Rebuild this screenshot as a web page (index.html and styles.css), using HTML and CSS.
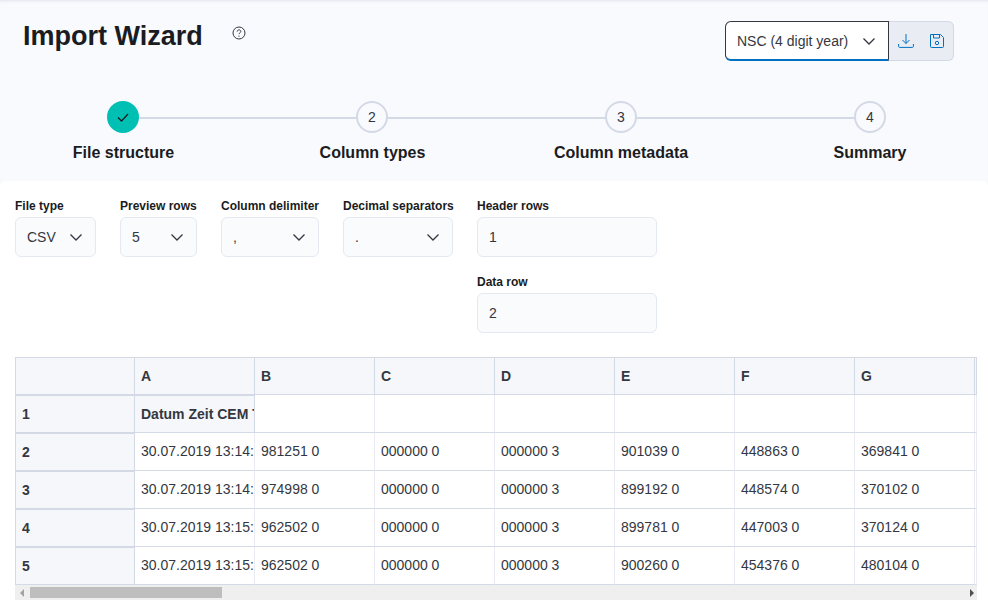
FILE: index.html
```html
<!DOCTYPE html>
<html lang="en">
<head>
<meta charset="utf-8">
<title>Import Wizard</title>
<link rel="stylesheet" href="styles.css">
</head>
<body>
<header class="top">
  <div class="title-row">
    <h1 class="title">Import Wizard</h1>
    <svg class="help" width="14" height="14" viewBox="0 0 14 14" fill="none" stroke="#343741"><circle cx="7" cy="7" r="6"/><path d="M5.2 5.600c0-1.100.8-1.700 1.800-1.700s1.800.6 1.800 1.600c0 1.300-1.800 1.300-1.800 2.600" stroke-width="1"/><circle cx="7" cy="10.100" r=".7" fill="#343741" stroke="none"/></svg>
    <div class="format-group">
      <div class="format-select"><span>NSC (4 digit year)</span>
        <svg class="chev" width="16" height="16" viewBox="0 0 16 16" fill="none" stroke="#343741" stroke-width="1.300"><path d="M2.500 5.500 8 11l5.500-5.500"/></svg>
      </div>
      <div class="format-actions">
        <svg width="16" height="16" viewBox="0 0 16 16" fill="none" stroke="#0071c2" stroke-width="1"><path d="M8 1v9.500M4.500 7 8 10.500 11.500 7M.6 11v2.400c0 .6.400 1 1 1h12.800c.6 0 1-.4 1-1V11"/></svg>
        <svg width="16" height="16" viewBox="0 0 16 16" fill="none" stroke="#0071c2" stroke-width="1"><path d="M1.500 1.500h10l3 3v9a1 1 0 0 1-1 1h-11a1 1 0 0 1-1-1zM4.500 1.500v3.500h6V1.500"/><circle cx="8" cy="10" r="1.700"/></svg>
      </div>
    </div>
  </div>
  <ol class="steps">
    <li class="step step-done"><span class="dot"><svg width="14" height="14" viewBox="0 0 14 14" fill="none" stroke="#1a1c21" stroke-width="1.300"><path d="M2 7.500 5.500 11 12 4"/></svg></span><span class="step-label">File structure</span></li>
    <li class="step"><span class="dot">2</span><span class="step-label">Column types</span></li>
    <li class="step"><span class="dot">3</span><span class="step-label">Column metadata</span></li>
    <li class="step"><span class="dot">4</span><span class="step-label">Summary</span></li>
  </ol>
</header>
<main class="panel">
  <form class="form">
    <div class="field w-file"><label class="label">File type</label><div class="control"><span>CSV</span><svg class="chev" width="16" height="16" viewBox="0 0 16 16" fill="none" stroke="#343741" stroke-width="1.300"><path d="M2.500 5.500 8 11l5.500-5.500"/></svg></div></div>
    <div class="field w-rows"><label class="label">Preview rows</label><div class="control"><span>5</span><svg class="chev" width="16" height="16" viewBox="0 0 16 16" fill="none" stroke="#343741" stroke-width="1.300"><path d="M2.500 5.500 8 11l5.500-5.500"/></svg></div></div>
    <div class="field w-delim"><label class="label">Column delimiter</label><div class="control"><span>,</span><svg class="chev" width="16" height="16" viewBox="0 0 16 16" fill="none" stroke="#343741" stroke-width="1.300"><path d="M2.500 5.500 8 11l5.500-5.500"/></svg></div></div>
    <div class="field w-dec"><label class="label">Decimal separators</label><div class="control"><span>.</span><svg class="chev" width="16" height="16" viewBox="0 0 16 16" fill="none" stroke="#343741" stroke-width="1.300"><path d="M2.500 5.500 8 11l5.500-5.500"/></svg></div></div>
    <div class="stack">
      <div class="field w-num"><label class="label">Header rows</label><div class="control"><span>1</span></div></div>
      <div class="field w-num"><label class="label">Data row</label><div class="control"><span>2</span></div></div>
    </div>
  </form>
  <div class="grid-wrap">
    <table class="sheet">
      <thead>
        <tr><th class="hd corner"></th><th class="hd">A</th><th class="hd">B</th><th class="hd">C</th><th class="hd">D</th><th class="hd">E</th><th class="hd">F</th><th class="hd">G</th><th class="hd"></th></tr>
      </thead>
      <tbody>
        <tr><th class="rh">1</th><td class="frozen"><div class="clip">Datum Zeit CEM Temperatur</div></td><td></td><td></td><td></td><td></td><td></td><td></td><td></td></tr>
        <tr><th class="rh">2</th><td><div class="clip">30.07.2019 13:14:00</div></td><td>981251 0</td><td>000000 0</td><td>000000 3</td><td>901039 0</td><td>448863 0</td><td>369841 0</td><td></td></tr>
        <tr><th class="rh">3</th><td><div class="clip">30.07.2019 13:14:30</div></td><td>974998 0</td><td>000000 0</td><td>000000 3</td><td>899192 0</td><td>448574 0</td><td>370102 0</td><td></td></tr>
        <tr><th class="rh">4</th><td><div class="clip">30.07.2019 13:15:00</div></td><td>962502 0</td><td>000000 0</td><td>000000 3</td><td>899781 0</td><td>447003 0</td><td>370124 0</td><td></td></tr>
        <tr><th class="rh">5</th><td><div class="clip">30.07.2019 13:15:30</div></td><td>962502 0</td><td>000000 0</td><td>000000 3</td><td>900260 0</td><td>454376 0</td><td>480104 0</td><td></td></tr>
      </tbody>
    </table>
    <div class="scrollbar">
      <span class="arrow arrow-left"></span>
      <span class="thumb"></span>
      <span class="arrow arrow-right"></span>
    </div>
  </div>
</main>
</body>
</html>
```
FILE: styles.css
```css
* { box-sizing: border-box; }
html, body { margin: 0; padding: 0; }
body {
  width: 988px;
  height: 613px;
  overflow: hidden;
  background: #fff;
  font-family: "Liberation Sans", Arial, sans-serif;
  color: #343741;
}
.top {
  height: 187px;
  background: #f9fafe;
  box-shadow: inset 0 3px 3px -2px rgba(152, 162, 179, .25);
  padding: 21px 0 0;
}
.title-row { display: flex; align-items: flex-start; height: 80px; padding-left: 23px; }
.title { margin: 0; font-size: 27px; line-height: 30px; font-weight: 700; color: #1a1c21; width: 209px; }
.help { margin-top: 5px; }
.format-group {
  display: flex;
  margin-left: 479px;
  width: 229px;
  height: 40px;
  background: #e9edf3;
  border-radius: 6px;
  box-shadow: inset 0 0 0 1px #d3dae6;
}
.format-select {
  width: 164px;
  height: 40px;
  background: #fff;
  border: 1px solid #343741;
  border-bottom: 2px solid #0071c2;
  border-radius: 6px 0 0 6px;
  display: flex;
  align-items: center;
  justify-content: space-between;
  padding: 0 11px;
  font-size: 14px;
}
.format-actions { flex: 1; display: flex; align-items: center; gap: 15px; padding-left: 9px; }
.steps {
  list-style: none;
  margin: 0 0 0 -1.500px;
  padding: 0;
  display: grid;
  grid-template-columns: repeat(4, 249px);
  width: 996px;
}
.step { position: relative; display: flex; flex-direction: column; align-items: center; }
.step::after {
  content: "";
  position: absolute;
  left: 50%;
  width: 100%;
  top: 16px;
  height: 2px;
  background: #d3dae6;
}
.step:last-child::after { display: none; }
.dot {
  position: relative;
  z-index: 1;
  width: 32px;
  height: 32px;
  border-radius: 50%;
  border: 2px solid #d3dae6;
  background: #f9fafe;
  display: flex;
  align-items: center;
  justify-content: center;
  font-size: 14px;
  color: #343741;
}
.step-done .dot { background: #00bfb3; border-color: #00bfb3; }
.step-label { margin-top: 10px; font-size: 16px; line-height: 20px; font-weight: 700; color: #1a1c21; }
.step:nth-child(-n+2) .step-label { padding-left: 1px; }
.panel {
  position: relative;
  margin-top: -6px;
  background: #fff;
  border-radius: 6px 6px 0 0;
  padding: 18px 11px 0 15px;
  height: 432px;
}
.form { display: flex; gap: 24px; align-items: flex-start; height: 158px; }
.stack { display: flex; flex-direction: column; gap: 18px; }
.field { display: flex; flex-direction: column; flex: none; }
.label { font-size: 12px; line-height: 14px; font-weight: 700; color: #1a1c21; margin-bottom: 4px; height: 14px; white-space: nowrap; }
.control {
  height: 40px;
  background: #fafbfd;
  border: 1px solid #e4e8f1;
  border-radius: 6px;
  display: flex;
  align-items: center;
  justify-content: space-between;
  padding: 0 11px;
  font-size: 14px;
  color: #343741;
}
.w-file { width: 81px; }
.w-rows { width: 77px; }
.w-delim { width: 98px; }
.w-dec { width: 110px; }
.w-num { width: 180px; }
.grid-wrap { width: 962px; overflow: hidden; }
.sheet {
  border-collapse: separate;
  border-spacing: 0;
  table-layout: fixed;
  width: 962px;
  font-size: 14px;
  color: #343741;
  border-top: 1px solid #d3dae6;
  border-left: 1px solid #d3dae6;
}
.sheet th, .sheet td {
  width: 120px;
  height: 38px;
  padding: 0 6px;
  text-align: left;
  white-space: nowrap;
  overflow: hidden;
  border-right: 1px solid #e9edf3;
  border-bottom: 1px solid #d3dae6;
}
.sheet td { padding-bottom: 2px; }
.sheet .hd { height: 37px; padding-bottom: 1px; }
.sheet .corner { width: 119px; }
.sheet th:last-child, .sheet td:last-child { width: 2px; padding: 0; }
.sheet th { font-weight: 700; background: #f5f7fa; border-right-color: #d3dae6; }
.sheet .rh { border-top: 1px solid #d3dae6; }
.sheet .frozen {
  background: #f5f7fa;
  font-weight: 700;
  border-right-color: #d3dae6;
  border-top: 1px solid #d3dae6;
  padding-bottom: 1px;
}
.clip { width: 114px; overflow: hidden; }
.scrollbar {
  display: flex;
  align-items: center;
  height: 15px;
  background: #efefef;
}
.arrow { width: 0; height: 0; border-top: 4px solid transparent; border-bottom: 4px solid transparent; }
.arrow-left { margin-left: 5px; border-right: 4px solid #a3a3a3; }
.arrow-right { margin-left: auto; margin-right: 3px; border-left: 4px solid #505050; }
.thumb { width: 192px; height: 11px; background: #bebebe; margin-left: 6px; }
```
